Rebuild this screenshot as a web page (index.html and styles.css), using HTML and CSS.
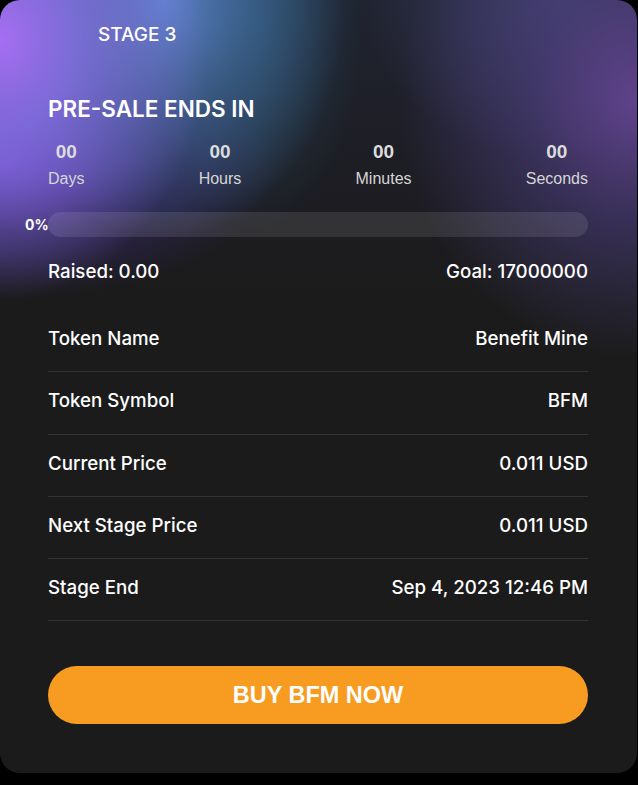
FILE: index.html
```html
<!DOCTYPE html>
<html>
<head>
<meta charset="utf-8">
<link rel="stylesheet" href="styles.css">
</head>
<body>
<div class="card">
  <div class="stage">STAGE 3</div>
  <h2 class="title">PRE-SALE ENDS IN</h2>
  <div class="countdown">
    <div class="unit"><div class="num">00</div><div class="lbl">Days</div></div>
    <div class="unit"><div class="num">00</div><div class="lbl">Hours</div></div>
    <div class="unit"><div class="num">00</div><div class="lbl">Minutes</div></div>
    <div class="unit"><div class="num">00</div><div class="lbl">Seconds</div></div>
  </div>
  <div class="progress">
    <span class="pct">0%</span>
    <div class="bar"><div class="fill" style="width:0%"></div></div>
  </div>
  <div class="raised">
    <span>Raised: 0.00</span>
    <span>Goal: 17000000</span>
  </div>
  <div class="table">
    <div class="row"><span>Token Name</span><span>Benefit Mine</span></div>
    <div class="row"><span>Token Symbol</span><span>BFM</span></div>
    <div class="row"><span>Current Price</span><span>0.011 USD</span></div>
    <div class="row"><span>Next Stage Price</span><span>0.011 USD</span></div>
    <div class="row"><span>Stage End</span><span>Sep 4, 2023 12:46 PM</span></div>
  </div>
  <button class="buy">BUY BFM NOW</button>
</div>
</body>
</html>
```
FILE: styles.css
```css
html, body {
  margin: 0;
  padding: 0;
  background: #000;
}
body {
  width: 638px;
  height: 785px;
  font-family: Inter, "Noto Sans", sans-serif;
  color: #fff;
}
.card {
  width: 637px;
  height: 773px;
  box-sizing: border-box;
  border-radius: 20px;
  padding: 24px 49px 0 48px;
  background:
    radial-gradient(ellipse 210px 260px at 0px 40px, rgba(166,110,244,1) 0%, rgba(140,118,240,0.8) 35%, rgba(120,110,220,0) 100%),
    radial-gradient(ellipse 180px 240px at 165px 0px, rgba(95,140,215,0.9) 0%, rgba(70,115,170,0.55) 50%, rgba(40,80,110,0) 100%),
    radial-gradient(ellipse 110px 210px at 255px 20px, rgba(40,85,110,0.6) 0%, rgba(40,85,110,0) 100%),
    radial-gradient(ellipse 240px 260px at 638px 100px, rgba(96,66,140,1) 0%, rgba(75,62,125,0.6) 45%, rgba(55,50,100,0) 100%),
    radial-gradient(ellipse 200px 160px at 560px 0px, rgba(70,72,120,0.7) 0%, rgba(70,72,120,0) 100%),
    radial-gradient(ellipse 280px 135px at 0px 165px, rgba(92,58,172,0.95) 0%, rgba(64,44,128,0.55) 50%, rgba(40,30,80,0) 100%),
    linear-gradient(to bottom, rgba(34,38,56,0.7) 0px, rgba(30,30,42,0.45) 200px, rgba(27,27,27,0) 300px),
    #1b1b1b;
}
.stage {
  margin-left: 50px;
  font-size: 19px;
  font-weight: 500;
  line-height: 22px;
}
.title {
  margin: 49px 0 0;
  font-size: 22.5px;
  font-weight: 600;
  line-height: 28px;
}
.countdown {
  display: flex;
  justify-content: space-between;
  margin-top: 18px;
}
.unit {
  text-align: center;
  font-family: "Liberation Sans", Arial, sans-serif;
}
.num {
  font-size: 19px;
  font-weight: 700;
  line-height: 22px;
  color: #dcdcdc;
}
.lbl {
  font-size: 16px;
  line-height: 20px;
  margin-top: 6px;
  color: #d6d6d6;
}
.progress {
  display: flex;
  align-items: center;
  margin: 23px 0 0 -23px;
}
.pct {
  width: 23px;
  font-size: 14px;
  font-weight: 700;
  line-height: 25px;
}
.bar {
  flex: 1;
  height: 25px;
  border-radius: 13px;
  background: rgba(255,255,255,0.1);
  overflow: hidden;
}
.fill {
  height: 100%;
  background: #f79c21;
}
.raised {
  display: flex;
  justify-content: space-between;
  margin-top: 24px;
  font-size: 18.7px;
  font-weight: 500;
  line-height: 22px;
}
.table {
  margin-top: 27px;
}
.row {
  display: flex;
  justify-content: space-between;
  padding: 18px 0 21.25px;
  line-height: 22px;
  font-size: 18.7px;
  font-weight: 500;
  border-bottom: 1px solid #343434;
}
.buy {
  display: block;
  width: 100%;
  height: 58px;
  margin-top: 45px;
  border: none;
  border-radius: 29px;
  background: #f79c21;
  color: #fff;
  font-family: "Liberation Sans", Arial, sans-serif;
  font-size: 23.5px;
  font-weight: 700;
  cursor: pointer;
}
```
